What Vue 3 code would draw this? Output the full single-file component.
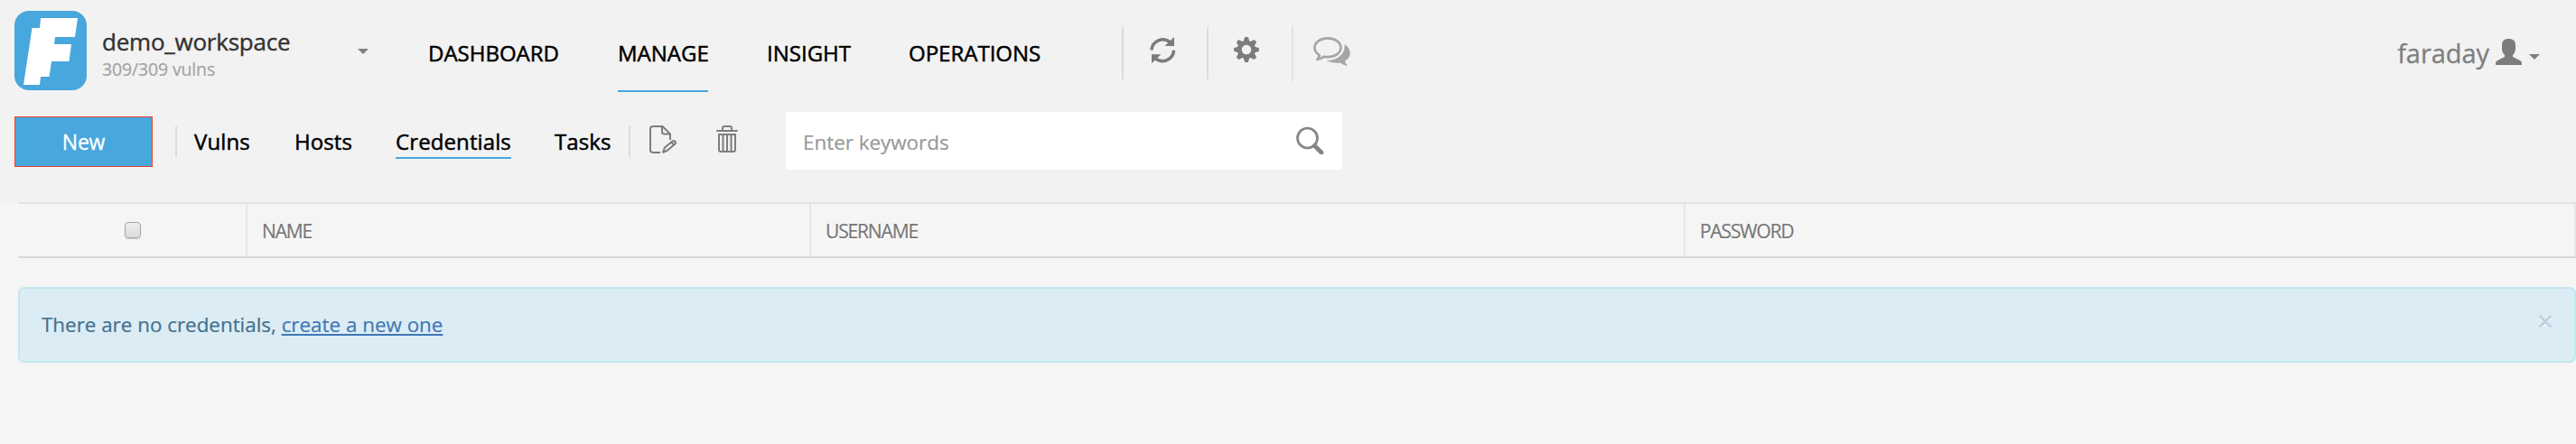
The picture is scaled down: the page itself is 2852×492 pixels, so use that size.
<script setup>
const mainNav = [
  { label: 'DASHBOARD', cls: 'dashboard' },
  { label: 'MANAGE', cls: 'manage active' },
  { label: 'INSIGHT', cls: 'insight' },
  { label: 'OPERATIONS', cls: 'operations' },
]
const tabs = [
  { label: 'Vulns', cls: 'vulns' },
  { label: 'Hosts', cls: 'hosts' },
  { label: 'Credentials', cls: 'credentials active' },
  { label: 'Tasks', cls: 'tasks' },
]
const columns = ['NAME', 'USERNAME', 'PASSWORD']
const teeth = [0, 45, 90, 135, 180, 225, 270, 315]
</script>

<template>
  <div class="page">
    <div class="top">
      <header class="header">
        <svg class="logo" viewBox="0 0 80 88">
          <rect width="80" height="88" rx="16" fill="#48a7dd" />
          <path fill="#fff" d="M29 8H70L67 29H45L44 37H63L60.500 56H41L38.500 73H29L28 82H10L19.500 19H28Z" />
        </svg>
        <div class="workspace">
          <div class="ws-name">demo_workspace</div>
          <div class="ws-count">309/309 vulns</div>
        </div>
        <svg class="caret ws-caret" viewBox="0 0 12 6"><path fill="#808080" d="M0 0H12L6 6Z" /></svg>
        <nav class="main-nav">
          <a v-for="n in mainNav" :key="n.label" :class="n.cls">{{ n.label }}</a>
        </nav>
        <div class="tools">
          <div class="tool">
            <svg width="29" height="30" viewBox="0 0 29 30">
              <g fill="none" stroke="#7c7c7c" stroke-width="3.600">
                <path d="M2 14.500A12.300 12.300 0 0 1 22.500 6" />
                <path d="M26.500 14.800A12.300 12.300 0 0 1 6 23.500" />
              </g>
              <path fill="#7c7c7c" d="M27 0V10H16.500Z M2 29.300V19.300H12.500Z" />
            </svg>
          </div>
          <div class="tool">
            <svg width="28" height="28" viewBox="-14 -14 28 28">
              <g fill="#7c7c7c">
                <path v-for="a in teeth" :key="a" :transform="`rotate(${a})`" d="M-3.800 -8L-1.800 -13.900H1.800L3.800 -8Z" />
              </g>
              <circle r="7.700" fill="none" stroke="#7c7c7c" stroke-width="4.800" />
            </svg>
          </div>
          <div class="tool chat">
            <svg width="41" height="32" viewBox="0 0 41 32">
              <path fill="none" stroke="#a6a6a6" stroke-width="2.700" stroke-linejoin="round" d="M16 1.400C24 1.400 30.500 6 30.500 11.800S24 22.200 16 22.200C14.500 22.200 13 22 12 21.700C9.500 23.500 7 24.600 4.300 24.900C5.800 23.500 6.600 21.500 6.500 19.800C3.500 18 1.500 15 1.500 11.800C1.500 6 8 1.400 16 1.400Z" />
              <path fill="#a6a6a6" d="M34.500 8C38.500 10.500 40.800 14 40.800 17.800C40.800 21.500 38.500 24.800 35 26.500C35.500 28.800 36.500 30 38 31.700C34.500 31.700 32 30.500 30 28.500C24.500 29.200 19 28.500 14.500 26C25 26.600 36 20 34.500 8Z" />
            </svg>
          </div>
        </div>
        <div class="user">
          <span class="user-name">faraday</span>
          <svg class="user-icon" viewBox="0 0 29 29">
            <path fill="#7c7c7c" d="M14.500 0C19.500 0 22 2.500 22 7V11C22 14 20.600 16.500 19 18V20L27 24Q29 25.200 29 27V29H0V27Q0 25.200 2 24L10 20V18C8.400 16.500 7 14 7 11V7C7 2.500 9.500 0 14.500 0Z" />
          </svg>
          <svg class="caret" viewBox="0 0 12 6"><path fill="#7c7c7c" d="M0 0H12L6 6Z" /></svg>
        </div>
      </header>

      <div class="toolbar">
        <button class="new">New</button>
        <i class="bar" />
        <nav class="tabs">
          <a v-for="t in tabs" :key="t.label" :class="t.cls">{{ t.label }}</a>
        </nav>
        <i class="bar second" />
        <svg class="edit" viewBox="0 0 30 31">
          <g fill="none" stroke="#7d7d7d" stroke-width="2">
            <path d="M12 30H4Q1 30 1 27V4Q1 1 4 1H14.500L23 9.500V16" />
            <path d="M14 1V7Q14 9.500 16.500 9.500H23" />
            <path stroke-linejoin="round" d="M15 29.700L17 24.500L25.500 17.500Q27 16.500 28.500 18T28 20.800L19.500 28Z" />
            <path d="M24 18.500L27 21.500" />
          </g>
        </svg>
        <svg class="trash" viewBox="0 0 24 30">
          <g fill="none" stroke="#7d7d7d" stroke-width="2">
            <path d="M0.300 6H23.700M7 6V3Q7 1 9 1H15Q17 1 17 3V6" />
            <path d="M3 10H21V27Q21 29 19 29H5Q3 29 3 27ZM7.500 10V29M12 10V29M16.500 10V29" />
          </g>
        </svg>
        <div class="search">
          <span>Enter keywords</span>
          <svg width="31" height="31" viewBox="0 0 31 31">
            <circle cx="12.500" cy="13" r="11" fill="none" stroke="#858585" stroke-width="2.700" />
            <path d="M20.500 21.500L28 29" stroke="#858585" stroke-width="4.800" stroke-linecap="round" />
          </svg>
        </div>
      </div>
    </div>

    <main class="content">
      <div class="table-head">
        <div class="cell check"><span class="box" /></div>
        <div v-for="c in columns" :key="c" class="cell">{{ c }}</div>
      </div>
      <div class="alert">
        <p>There are no credentials, <a>create a new one</a></p>
        <svg width="16" height="17" viewBox="0 0 16 17">
          <path d="M1.500 3.500L14.500 16M14.500 3.500L1.500 16" stroke="#f2f9fc" stroke-width="3" />
          <path d="M1.500 1.800L14.500 14.800M14.500 1.800L1.500 14.800" stroke="#bcd2df" stroke-width="3" />
        </svg>
      </div>
    </main>
  </div>
</template>

<style>
body { margin: 0; background: #f5f5f5; }
</style>

<style scoped>
* { box-sizing: border-box; }
.page { width: 2852px; height: 492px; background: #f5f5f5; font-family: "Open Sans", sans-serif; overflow: hidden; }
svg { display: block; flex: none; }
.top { height: 224px; background: #f2f2f2; }
.header { display: flex; height: 124px; padding-left: 16px; align-items: flex-start; }
.logo { width: 80px; height: 88px; margin-top: 12px; }
.workspace { width: 283px; margin: 28px 0 0 17px; white-space: nowrap; }
.ws-name { font-size: 26px; line-height: 36px; color: #333; letter-spacing: -0.220px; -webkit-text-stroke: 0.400px #333; }
.ws-count { font-size: 19.500px; line-height: 26px; color: #a3a3a3; letter-spacing: -0.150px; -webkit-text-stroke: 0.200px #a3a3a3; }
.caret { width: 12px; height: 6px; }
.ws-caret { margin-top: 54px; }
.main-nav { display: flex; margin-left: 66px; font-size: 24px; color: #000; }
.main-nav a { height: 102px; padding-top: 17px; line-height: 83px; border-bottom: 2px solid transparent; white-space: nowrap; -webkit-text-stroke: 0.500px #000; }
.main-nav .active { border-color: #48a7dd; }
.dashboard { width: 146px; margin-right: 64px; }
.manage { width: 100px; margin-right: 65px; }
.insight { width: 94px; margin-right: 63px; }
.operations { width: 148px; }
.tools { display: flex; margin: 30px 0 0 88px; }
.tool { width: 94px; height: 58px; border-left: 2px solid #dcdcdc; padding: 11px 0 0 29px; }
.tool + .tool { padding-left: 28px; }
.tool.chat { height: 62px; margin-top: -2px; padding: 13px 0 0 22px; border-color: #e2e2e2; }
.user { display: flex; margin: 40px 40px 0 auto; align-items: center; height: 38px; color: #7f7f7f; }
.user-name { font-size: 29px; line-height: 38px; margin-right: 7px; letter-spacing: -0.050px; -webkit-text-stroke: 0.300px #7f7f7f; }
.user-icon { width: 29px; height: 29px; margin: -3px 8px 0 0; }
.user .caret { margin-top: 8px; }
.toolbar { display: flex; height: 64px; padding-left: 16px; align-items: flex-start; }
.new { width: 153px; height: 56px; margin-top: 5px; padding: 0; border: 1px solid #ee4130; background: #48a7dd; color: #fff; font: 23px/54px "Open Sans", sans-serif; letter-spacing: -0.200px; -webkit-text-stroke: 0.300px #fff; }
.bar { flex: none; width: 2px; height: 34px; margin: 16px 19px 0 25px; background: #dcdcdc; }
.bar.second { margin: 16px 21px 0 17px; }
.tabs { display: flex; font-size: 24px; color: #000; }
.tabs a { height: 52px; padding-top: 15px; line-height: 35px; border-bottom: 2px solid transparent; white-space: nowrap; letter-spacing: 0.100px; -webkit-text-stroke: 0.500px #000; }
.tabs .active { border-color: #48a7dd; }
.vulns { width: 62px; margin-right: 49px; }
.hosts { width: 63px; margin-right: 49px; }
.credentials { width: 128px; margin-right: 48px; }
.tasks { width: 65px; }
.edit { width: 30px; height: 31px; margin-top: 15px; }
.trash { width: 24px; height: 30px; margin: 15px 53px 0 44px; }
.search { display: flex; justify-content: space-between; width: 616px; height: 64px; padding: 16px 20px 0 19px; background: #fff; color: #999; font-size: 22.400px; line-height: 35px; -webkit-text-stroke: 0.200px #999; }
.content { padding-left: 20px; }
.table-head { display: grid; grid-template-columns: 254px 624px 968px 986px; height: 62px; border-top: 2px solid #e4e4e4; background: #f5f5f5; }
.cell { height: 60px; padding-left: 16px; border-right: 2px solid #e7e7e7; border-bottom: 2px solid #d6d6d6; color: #777; font-size: 21px; line-height: 61px; letter-spacing: -1.150px; text-shadow: 0 2px 0 #fff; -webkit-text-stroke: 0.200px #777; }
.check { padding: 20px 0 0 118px; }
.box { display: block; width: 18px; height: 18px; border: 1.500px solid #a5a5a5; border-radius: 4px; background: linear-gradient(#eee, #dcdcdc); box-shadow: 0 1px 1px #ccc; }
.alert { display: flex; justify-content: space-between; height: 84px; margin-top: 32px; padding: 28px 24px 0 24px; border: 2px solid #c1e8ef; border-radius: 7px; background: #dcecf4; color: #41718f; font-size: 22.400px; }
.alert p { margin: -6px 0 0; line-height: 36px; -webkit-text-stroke: 0.200px; }
.alert a { color: #3f78b5; text-decoration: underline; text-decoration-thickness: 2px; text-underline-offset: 2px; }
</style>
